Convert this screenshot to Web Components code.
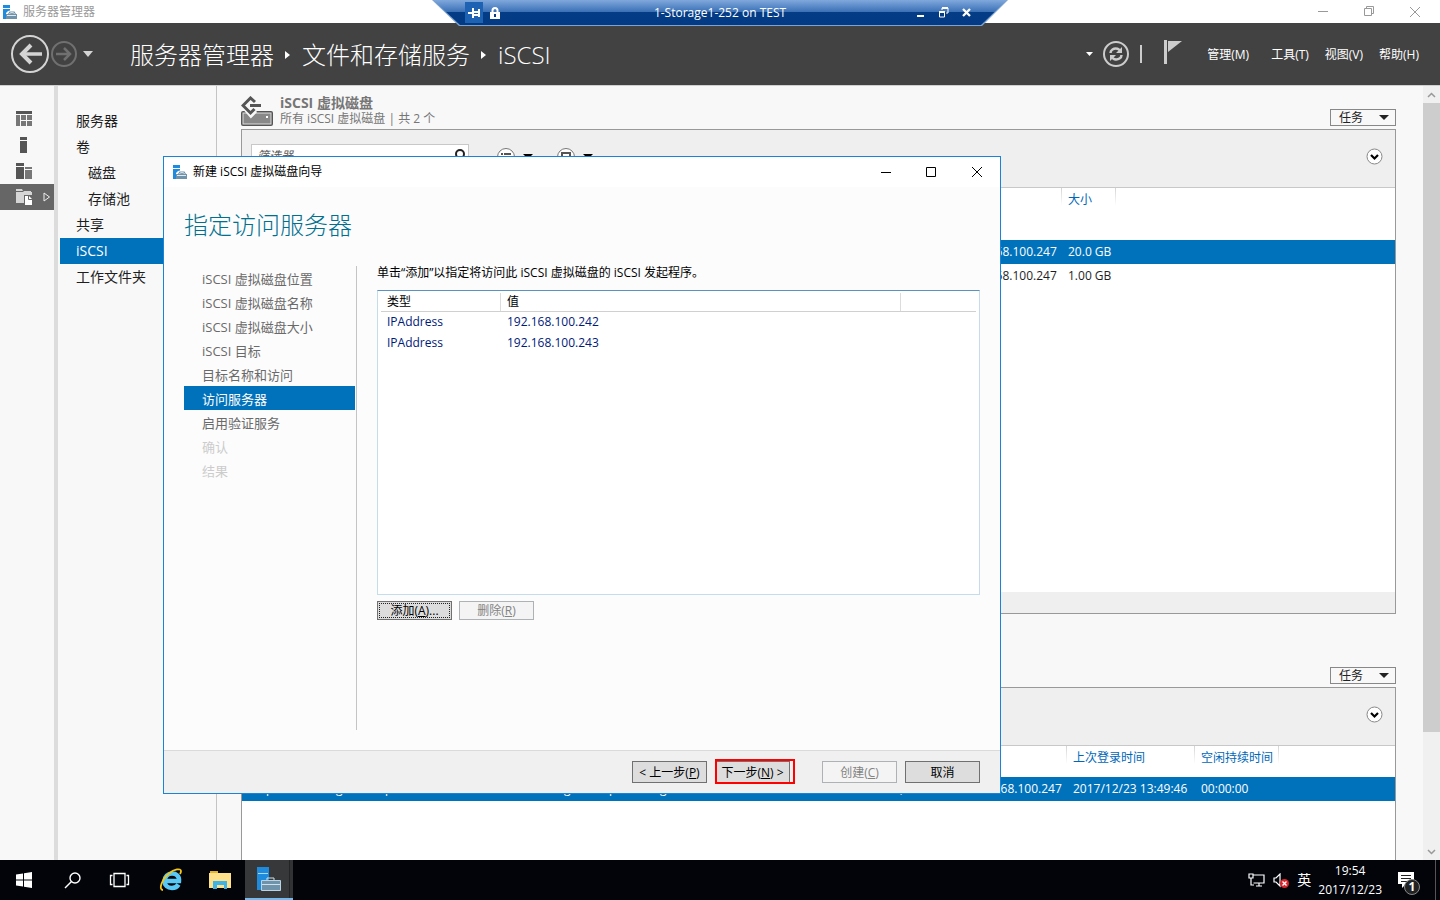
<!DOCTYPE html>
<html lang="zh-CN">
<head>
<meta charset="utf-8">
<title>服务器管理器</title>
<style>
html,body{margin:0;height:100%}
body{font:12px/16px "Open Sans","Noto Sans CJK SC",sans-serif;color:#1e1e1e;overflow:hidden}
</style>
</head>
<body>
<manager-app></manager-app>
<script>
const RESET = `*{box-sizing:border-box}
button{font:inherit;color:inherit;background:none;border:0;padding:0;margin:0;display:flex;align-items:center;justify-content:center}
a{color:inherit;text-decoration:none}ul,ol{list-style:none;margin:0;padding:0}h1,h2,p{margin:0;font-weight:inherit;font-size:inherit}
svg{display:block;flex:none}table{border-collapse:collapse;table-layout:fixed;width:100%}th,td{padding:0;text-align:left;font-weight:400;white-space:nowrap}`;

function define(name, css, html) {
  const t = document.createElement('template');
  customElements.define(name, class extends HTMLElement {
    constructor() {
      super();
      t.innerHTML = `<style>${RESET}${css}</style>${typeof html === 'function' ? html(this) : html}`;
      this.attachShadow({mode: 'open'}).append(t.content.cloneNode(true));
    }
  });
}

const serverIcon = `<svg width="14" height="14" viewBox="0 0 14 14"><path fill="#1e8bdc" d="M0 0h7v3H0zM0 4h7v1.500L5 6 3 8v6H0z"/><path fill="#6f93ab" d="M3 9h2l1.500-2.500h5L13 9h1v5H3z"/><path fill="none" stroke="#fff" stroke-width=".8" d="M6.500 9l1-1.300h3l1 1.300M4 10.500h9"/></svg>`;

/* Session bar of the remote connection */
define('session-bar', `
:host{display:block;position:absolute;top:0;left:50%;margin-left:-288px;width:576px;height:26px;color:#fff;background:#7da3d0;clip-path:polygon(0 0,100% 0,550px 100%,27px 100%)}
.in{height:25px;display:grid;grid-template-columns:1fr auto 1fr;align-items:center;background:linear-gradient(#80a8dc,#3a70b5 48%,#043c86 49%,#043a84);clip-path:polygon(1px 0,575px 0,549px 100%,28px 100%)}
.l,.r{display:flex;align-items:center}.l{padding-left:33px;gap:7px}.r{justify-content:flex-end;gap:10px;padding-right:35px}
.pin{width:18px;height:21px;background:#1e62b4}.r button{width:13px;height:20px}`,
`<div class="in"><div class="l"><button class="pin" aria-label="固定"><svg width="13" height="10" viewBox="0 0 13 10" fill="none" stroke="#fff" stroke-width="2"><path d="M0 5h5M5 0v10M5 4h6M5 7h6M11 1v8"/></svg></button>
<svg width="10" height="12" viewBox="0 0 10 12"><path fill="none" stroke="#fff" stroke-width="2" d="M2.500 6V3.500a2.500 2.500 0 0 1 5 0V6"/><path fill="#fff" d="M0 5h10v7H0z"/><path fill="#043c86" d="M4 7h2v3H4z"/></svg></div>
<span>1-Storage1-252 on TEST</span>
<div class="r"><button aria-label="最小化"><svg width="8" height="10"><path fill="#fff" d="M0 7h7v2H0z"/></svg></button>
<button aria-label="还原"><svg width="10" height="11" fill="none" stroke="#fff"><path d="M3 3V1h6v5H7M.5 5v5h5V5"/><path stroke-width="2" d="M3 1h6M0 5h6"/></svg></button>
<button aria-label="关闭"><svg width="9" height="9" stroke="#fff" stroke-width="2.300"><path d="M1 1l7 7M8 1L1 8"/></svg></button></div></div>`);

/* Window title bar with the three caption buttons */
define('title-bar', `
:host{display:flex;align-items:center;background:#fff;color:var(--ink,#000);height:var(--bar,30px);padding:0 var(--end,1px) 0 var(--inset,9px);flex:none}
.t{margin-left:6px;flex:1}button{width:var(--cap,45px);height:100%}`,
`${serverIcon}<span class="t"><slot></slot></span>
<button aria-label="最小化"><svg width="11" height="11"><path stroke="currentColor" d="M0 5.500h10"/></svg></button>
<button aria-label="最大化"><slot name="max"><svg width="11" height="11" fill="none" stroke="currentColor"><path d="M.5 .5h9v9h-9z"/></svg></slot></button>
<button aria-label="关闭"><svg width="12" height="12" stroke="currentColor"><path d="M1 1l10 10M11 1L1 11"/></svg></button>`);

define('app-header', `
:host{display:flex;align-items:center;height:62px;flex:none;background:#424242;color:#fff;padding:0 21px 0 10px}
.crumbs{display:flex;align-items:center;margin-left:37px;flex:1;font-size:24px;line-height:32px;padding-top:2px;font-weight:300}
.crumbs ol,.crumbs li{display:flex;align-items:center}.crumbs svg{margin:0 12px 0 11px}
.fwd{margin:0 6px 0 1px}.tools{display:flex;align-items:center}.bar{width:2px;height:18px;background:#ccc;margin:0 22px 0 10px}
nav.menu{display:flex;margin-left:25px;gap:16px;padding-top:2px}nav.menu button:first-child{margin-right:6px}`,
`<button aria-label="后退"><svg width="40" height="40" viewBox="0 0 40 40" fill="none" stroke="#d4d4d4"><circle cx="20" cy="20" r="18" stroke-width="2"/><path stroke-width="3.500" d="M32 20H11"/><path stroke-width="4" d="M21 11l-9 9 9 9"/></svg></button>
<button class="fwd" aria-label="前进" disabled><svg width="26" height="26" viewBox="0 0 26 26" fill="none" stroke="#707070"><circle cx="13" cy="13" r="12" stroke-width="2"/><path stroke-width="2.500" d="M5 13h14M13 7l6 6-6 6"/></svg></button>
<button aria-label="历史记录"><svg width="10" height="7"><path fill="#d4d4d4" d="M0 0h10L5 6z"/></svg></button>
<nav class="crumbs" aria-label="路径"><ol><li><a href="#">服务器管理器</a><svg width="5" height="8"><path fill="#fff" d="M0 0l5 4-5 4z"/></svg></li><li><a href="#">文件和存储服务</a><svg width="5" height="8"><path fill="#fff" d="M0 0l5 4-5 4z"/></svg></li><li><a href="#">iSCSI</a></li></ol></nav>
<div class="tools"><button aria-label="更多"><svg width="7" height="4"><path fill="#fff" d="M0 0h7L3.500 4z"/></svg></button>
<button aria-label="刷新" style="margin-left:9px"><svg width="28" height="28" viewBox="0 0 28 28" fill="none" stroke="#ccc"><circle cx="14" cy="14" r="12" stroke-width="2"/><path stroke-width="2.500" d="M8.500 13c0-3 3-5 7-4.200l2.500 1.500M19.500 15c0 3-3 5-7 4.200L10 17.700"/><path fill="#ccc" stroke="none" d="M20 7v6h-6zM8 21v-6h6z"/></svg></button>
<span class="bar"></span>
<button aria-label="通知"><svg width="18" height="30" viewBox="0 0 18 30"><path fill="#ccc" d="M0 1h3v24H0zM4 2h14L4 13z"/></svg></button></div>
<nav class="menu"><button>管理(M)</button><button>工具(T)</button><button>视图(V)</button><button>帮助(H)</button></nav>`);

define('icon-rail', `
:host{display:block;width:58px;flex:none;border-right:4px solid #dcdcdc;padding-top:20px}
button{width:54px;height:26px;justify-content:flex-start;padding-left:16px;gap:8px}.on{background:#666}`,
`<button aria-label="仪表板"><svg width="16" height="16"><path fill="#555" d="M0 0h16v3H0z"/><path fill="#777" d="M0 4h4v11H0zM5 4h5v5H5zM11 4h5v5h-5zM5 10h5v5H5zM11 10h5v5h-5z"/></svg></button>
<button aria-label="本地服务器"><svg width="16" height="16"><path fill="#555" d="M4 0h7v3H4zM4 4h7v12H4z"/></svg></button>
<button aria-label="所有服务器"><svg width="16" height="16"><path fill="#555" d="M0 0h8v3H0zM0 4h8v12H0z"/><path fill="#777" d="M9 4h7v2H9zM9 7h7v9H9z"/></svg></button>
<button class="on" aria-label="文件和存储服务"><svg width="17" height="17"><path fill="#d5d5d5" d="M0 0h6l1 2H0zM0 3h7v11H0zM8 2h7v4H8v8H7V3z"/><path fill="#d5d5d5" d="M8 3h8v3H8z"/><path fill="#fff" d="M9 7h4l3 3v6H9z"/><path fill="none" stroke="#666" d="M12.500 7v3.500H16"/></svg>
<svg width="8" height="10" style="margin-left:2px"><path fill="none" stroke="#eee" d="M1 1l5.500 4L1 9z"/></svg></button>`);

define('side-nav', `
:host{display:block;width:159px;flex:none;border-right:1px solid #c4c4c4;padding:22px 0 0 2px;font-size:14px;line-height:26px}
a{display:block;padding-left:16px}.sub{padding-left:28px}.on{background:#0072bc;color:#fff}`,
`<nav><ul><li><a href="#">服务器</a></li><li><a href="#">卷</a></li><li><a class="sub" href="#">磁盘</a></li><li><a class="sub" href="#">存储池</a></li><li><a href="#">共享</a></li><li><a class="on" href="#" aria-current="page">iSCSI</a></li><li><a href="#">工作文件夹</a></li></ul></nav>`);

/* Tile: heading, task menu, filter toolbar, and a slotted table */
define('tile-panel', `
:host{display:flex;flex-direction:column;flex:none}
header{display:flex;height:36px;align-items:flex-end;padding-bottom:3px;color:#767676}
.h{flex:1;margin-left:7px}
.task{width:66px;height:17px;border:1px solid #888;color:#222;justify-content:space-between;padding:0 6px 0 8px}
.box{display:flex;flex-direction:column;flex:1;border:1px solid #999;border-bottom:var(--edge,1px solid #999);background:#fff}
.bar{height:58px;flex:none;background:#efefef;border-bottom:1px solid #c8c8c8;display:flex;padding:0 12px 0 9px}
.f{display:flex;align-items:center;margin-top:14px;width:218px;height:24px;background:#fff;border:1px solid #c8c8c8;padding:0 2px 0 5px}
input{flex:1;min-width:0;border:0;outline:0;background:none;padding:0;font:italic 12px/16px "Open Sans","Noto Sans CJK SC",sans-serif}
input::placeholder{color:#555;opacity:1}
.c{gap:7px;align-self:flex-start;margin:17px 0 0 27px}.c + .c{margin-left:23px}.more{margin:18px 0 0 auto;align-self:flex-start}
.body{flex:1}.foot{height:21px;flex:none;background:#efefef}:host([open]) .foot{display:none}`,
`<header><slot name="icon"></slot><div class="h"><slot name="head"></slot></div><button class="task">任务<svg width="10" height="6"><path fill="#222" d="M0 0h10L5 5z"/></svg></button></header>
<div class="box"><div class="bar"><label class="f"><input type="text" placeholder="筛选器" aria-label="筛选器"><svg width="12" height="14" fill="none" stroke="#222" stroke-width="2"><circle cx="6" cy="5" r="4"/><path d="M4 8l-3 4"/></svg></label>
<button class="c" aria-label="查看"><svg width="20" height="20" fill="none" stroke="#777"><circle cx="10" cy="10" r="8.500" fill="#fff"/><path stroke="#555" stroke-width="2" d="M5 7h2M8 7h7M5 10h2M8 10h7M5 13h2M8 13h7"/></svg><svg width="10" height="6"><path d="M0 0h10L5 5z"/></svg></button>
<button class="c" aria-label="保存"><svg width="20" height="20" fill="none" stroke="#777"><circle cx="10" cy="10" r="8.500" fill="#fff"/><path stroke="#555" stroke-width="2" d="M6 6h8v8H6zM8 11h4"/></svg><svg width="10" height="6"><path d="M0 0h10L5 5z"/></svg></button>
<button class="more" aria-label="展开"><svg width="17" height="17" fill="none"><circle cx="8.500" cy="8.500" r="7.500" fill="#fff" stroke="#888"/><path stroke="#000" stroke-width="2.200" d="M5 7l3.500 3.500L12 7"/></svg></button></div>
<div class="body"><slot></slot></div><div class="foot"></div></div>`);

const tableCss = `:host{display:block}
thead tr{height:var(--head,52px)}tbody tr{height:24px}
th{vertical-align:top;color:#0067b8;line-height:24px;padding-left:6px;background:linear-gradient(#d4d4d4,#fff) right top/1px 18px no-repeat}
.none{background:none}td{padding-left:6px}.on{background:#0072bc;color:#fff}.cut{padding-left:0}`;

define('disk-table', tableCss,
`<table><colgroup><col style="width:717px"><col style="width:103px"><col style="width:54px"><col></colgroup>
<thead><tr><th class="none"></th><th></th><th>大小</th><th class="none"></th></tr></thead>
<tbody><tr class="on"><td></td><td>192.168.100.247</td><td>20.0 GB</td><td></td></tr><tr><td></td><td>192.168.100.247</td><td>1.00 GB</td><td></td></tr></tbody></table>`);

define('target-table', tableCss + ':host{--head:31px}',
`<table><colgroup>${[24,70,49,179,45,51,240,64,103,128,84].map(w => `<col style="width:${w}px">`).join('')}<col></colgroup>
<thead><tr>${'<th class="none"></th>'.repeat(8)}<th></th><th>上次登录时间</th><th>空闲持续时间</th><th class="none"></th></tr></thead>
<tbody><tr class="on"><td></td>${['p','g','p','g','p','g',','].map(c => `<td class="cut">${c}</td>`).join('')}<td>192.168.100.247</td><td>2017/12/23 13:49:46</td><td>00:00:00</td><td></td></tr></tbody></table>`);

define('scroll-bar', `
:host{display:flex;flex-direction:column;width:17px;flex:none;background:#f0f0f0}
button{height:17px;flex:none}.track{flex:1}.thumb{height:85%;background:#cdcdcd}`,
`<button aria-label="向上滚动"><svg width="9" height="6" fill="none" stroke="#999" stroke-width="1.500"><path d="M1 5l3.500-3.500L8 5"/></svg></button><div class="track"><div class="thumb"></div></div><button aria-label="向下滚动"><svg width="9" height="6" fill="none" stroke="#999" stroke-width="1.500"><path d="M1 1l3.500 3.500L8 1"/></svg></button>`);

define('push-button', `
:host{display:block;width:75px}
button{width:100%;height:var(--h,22px);padding-top:var(--drop,2px);border:1px solid #707070;background:#ddd;color:#000;white-space:pre}
button:disabled{border-color:#adb2b5;background:#f4f4f4;color:#838383}
:host([focused]) button{outline:1px dotted #222;outline-offset:-3px}`,
el => `<button${el.hasAttribute('disabled') ? ' disabled' : ''}><span><slot></slot></span></button>`);

define('wizard-dialog', `
:host{display:flex;flex-direction:column;position:absolute;left:163px;top:156px;width:838px;height:638px;border:1px solid #1883d7;background:#fcfcfc;color:#000}
h1{font-size:24px;line-height:32px;font-weight:300;color:#00708f;margin:22px 0 25px 20px}
.main{flex:1;display:flex;padding:0 20px 20px}
ol{width:173px;border-right:1px solid #c4c4c4;font-size:13px;line-height:24px;color:#6a6a6a;padding-right:1px}
ol a{display:block;padding-left:18px;height:24px;line-height:26px}.on{background:#0072bc;color:#fff}.off{color:#ccc}
.c{flex:1;margin-left:20px}.c p{line-height:14px;padding-bottom:10px}
.list{height:305px;background:#fff;border:1px solid #c5dceb;border-top-color:#5a92c0;padding:0 3px}
thead th{height:20px;padding-top:2px;border-bottom:1px solid #d0d0d0;background:linear-gradient(#dcdcdc,#dcdcdc) right bottom/1px 18px no-repeat}
th:last-child{background:none}.list th,.list td{padding-left:6px}td{height:21px;color:#001a7a}
.row{display:flex;gap:7px;margin-top:6px;--h:19px;--drop:1px}
footer{height:43px;flex:none;background:#f0f0f0;border-top:1px solid #dadada;display:flex;justify-content:flex-end;align-items:center;padding-right:20px}
.next{position:relative;margin:0 32px 0 8px}.next i{position:absolute;left:0;top:-2px;width:80px;height:25px;border:2px solid #f00;pointer-events:none}
.next + push-button{margin-right:8px}`,
`<title-bar>新建 iSCSI 虚拟磁盘向导</title-bar><h1>指定访问服务器</h1>
<div class="main"><ol><li><a href="#">iSCSI 虚拟磁盘位置</a></li><li><a href="#">iSCSI 虚拟磁盘名称</a></li><li><a href="#">iSCSI 虚拟磁盘大小</a></li><li><a href="#">iSCSI 目标</a></li><li><a href="#">目标名称和访问</a></li><li><a class="on" href="#" aria-current="step">访问服务器</a></li><li><a href="#">启用验证服务</a></li><li><a class="off" href="#">确认</a></li><li><a class="off" href="#">结果</a></li></ol>
<div class="c"><p>单击“添加”以指定将访问此 iSCSI 虚拟磁盘的 iSCSI 发起程序。</p>
<div class="list"><table><colgroup><col style="width:120px"><col style="width:400px"><col></colgroup><thead><tr><th>类型</th><th>值</th><th></th></tr></thead><tbody><tr><td>IPAddress</td><td>192.168.100.242</td><td></td></tr><tr><td>IPAddress</td><td>192.168.100.243</td><td></td></tr></tbody></table></div>
<div class="row"><push-button focused>添加(<u>A</u>)...</push-button><push-button disabled>删除(<u>R</u>)</push-button></div></div></div>
<footer><push-button>&lt; 上一步(<u>P</u>)</push-button><div class="next"><push-button>下一步(<u>N</u>) &gt;</push-button><i></i></div><push-button disabled>创建(<u>C</u>)</push-button><push-button>取消</push-button></footer>`);

define('task-bar', `
:host{display:flex;height:40px;flex:none;background:#02040a;color:#fff}
button{width:48px;height:40px}.ie{margin-left:3px}.ex{margin:0 1px}.on{background:linear-gradient(90deg,#363839 44px,#222426 44px,#222426 45px,#303234 45px);border-bottom:2px solid #76b9ed}
.tray{margin-left:auto;display:flex;align-items:center}.tray button{width:auto}
.lang{font-size:14px;margin:0 7px 0 8px}.clock{text-align:center;line-height:19px}
.note{position:relative;margin:0 13px 0 15px}.note b{position:absolute;left:7px;top:19px;width:16px;height:16px;border:1px solid #888;border-radius:50%;background:#222;line-height:14px;text-align:center}
.desk{width:5px;height:40px;border-left:1px solid #555}`,
`<button aria-label="开始"><svg width="16" height="16" fill="#fff"><path d="M0 2.500l7-1V7.500H0zM8 1.300L16 0v7.500H8zM0 8.500h7v6l-7-1zM8 8.500h8V16l-8-1.300z"/></svg></button>
<button aria-label="搜索"><svg width="17" height="17" fill="none" stroke="#fff" stroke-width="1.400"><circle cx="11" cy="6" r="5"/><path d="M7.500 9.500L1 16"/></svg></button>
<button aria-label="任务视图"><svg width="22" height="16" fill="none" stroke="#fff" stroke-width="1.300"><path d="M5 1.500h11v13H5zM3.500 3.500h-2v9h2M17.500 3.500h2v9h-2"/></svg></button>
<button class="ie" aria-label="Internet Explorer"><svg width="24" height="24" viewBox="0 0 24 24" fill="none"><path stroke="#5ac8f5" stroke-width="4.500" d="M5.500 13H20C20.500 8 17 5.500 13 5.500s-7.500 3-7.500 7.500 3 7 7.500 7c3 0 5-1 6.500-3.500"/><path stroke="#f5c518" stroke-width="1.800" d="M4 22C-1 22 3 11 10 5.500 15 1 22 0 22 3c0 1-.3 2-1 3"/></svg></button>
<button class="ex" aria-label="文件资源管理器"><svg width="22" height="19" viewBox="0 0 22 19"><path fill="#e5b32c" d="M1 0h8v3H1z"/><path fill="#ffe18c" d="M0 2h22v15H0z"/><path fill="#3fb2e8" d="M4 10h14v8h-3v-4H8v4H4z"/></svg></button>
<button class="on" aria-label="服务器管理器"><svg width="26" height="26" viewBox="0 0 26 26"><path fill="#1e8bdc" d="M1 1h12v23H1z"/><path stroke="#a9d8f8" d="M2 7.500h10"/><path fill="#6f93ab" stroke="#bcd2e2" d="M5.500 14.500h19v10h-19z"/><path fill="none" stroke="#cfe0ea" d="M11 14v-2h7v2M6 18.500h18"/></svg></button>
<div class="tray"><button aria-label="网络"><svg width="17" height="14" fill="none" stroke="#fff" stroke-width="1.200"><path d="M5 2h11v8H5.500M8 13h6M11 10v3M1 1h4v4H1zM3 5v7h3"/></svg></button>
<button aria-label="音量" style="margin-left:8px"><svg width="16" height="15"><path fill="none" stroke="#fff" stroke-width="1.200" d="M1 5h2l4-4v12L3 9H1z"/><circle cx="11.500" cy="10.500" r="4.500" fill="#d8252c"/><path stroke="#fff" stroke-width="1.300" d="M9.500 8.500l4 4M13.500 8.500l-4 4"/></svg></button>
<button class="lang">英</button><div class="clock"><div>19:54</div><div>2017/12/23</div></div>
<button class="note" aria-label="通知"><svg width="25" height="18"><path fill="#fff" d="M1 1h16v12h-8l-4 4v-4H1z"/><path stroke="#222" d="M4 4.500h10M4 7.500h10M4 10.500h6"/></svg><b>1</b></button><span class="desk"></span></div>`);

define('manager-app', `
:host{display:flex;flex-direction:column;height:100vh;position:relative;background:#f8f8f8}
.top{--bar:23px;--inset:3px;--ink:#999;--cap:46px;--end:2px}
.work{flex:1;min-height:0;display:flex;border-top:1px solid #d0d0d0}
main{flex:1;min-width:0;overflow:hidden;display:flex;flex-direction:column;padding:7px 27px 0 24px}
.one{min-height:521px}.two{margin-top:37px;flex:1;--edge:0}
h2{font-size:14px;line-height:18px;font-weight:700}p{line-height:14px}`,
`<title-bar class="top">服务器管理器<svg slot="max" width="11" height="11" fill="none" stroke="#999"><path d="M.5 2.500h7v7h-7zM2.500 2V.500h7v7H8"/></svg></title-bar>
<app-header></app-header>
<div class="work"><icon-rail></icon-rail><side-nav></side-nav>
<main><tile-panel class="one"><svg slot="icon" width="32" height="30" viewBox="0 0 32 30" fill="none"><rect x="0" y="15" width="32" height="15" rx="2" fill="#555"/><rect x="2" y="17" width="28" height="11" fill="#888" stroke="#ddd"/><path fill="#fff" d="M25 20h2v2h-2z"/><path stroke="#f8f8f8" stroke-width="6" d="M3 10l7 8 4-4"/><path stroke="#555" stroke-width="3" d="M14 6L9.500 2 2 9.500 9.500 17l4-4M9 9.500h11"/></svg>
<h2 slot="head">iSCSI 虚拟磁盘</h2><p slot="head">所有 iSCSI 虚拟磁盘 | 共 2 个</p><disk-table></disk-table></tile-panel>
<tile-panel class="two" open><target-table></target-table></tile-panel></main><scroll-bar></scroll-bar></div>
<task-bar></task-bar><wizard-dialog></wizard-dialog><session-bar></session-bar>`);
</script>
</body>
</html>
